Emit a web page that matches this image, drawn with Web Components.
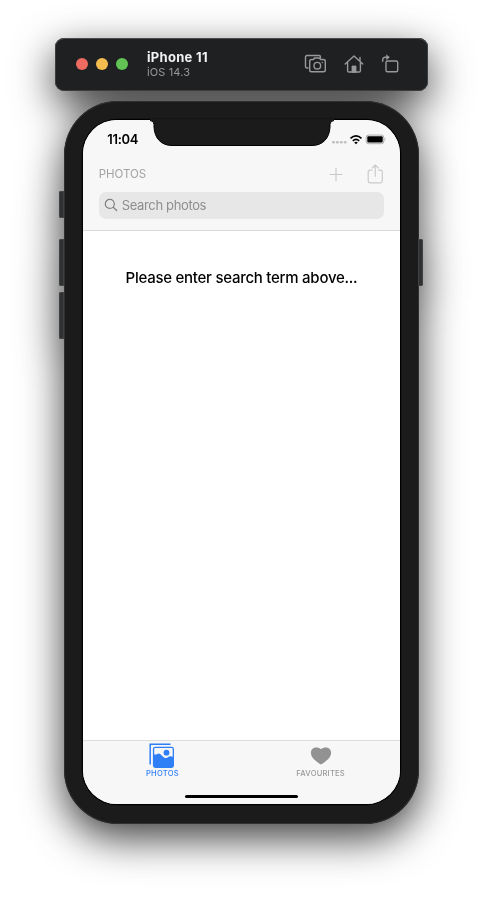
<!DOCTYPE html>
<html lang="en">
<head>
<meta charset="utf-8">
<title>Simulator</title>
<style>
html,body{margin:0;height:899px;overflow:hidden;background:#fff}
body{font-family:Inter,"Liberation Sans",sans-serif;-webkit-font-smoothing:antialiased}
</style>
</head>
<body>
<sim-stage>
  <sim-titlebar device="iPhone 11" os="iOS 14.3"></sim-titlebar>
  <sim-phone>
    <status-bar time="11:04"></status-bar>
    <nav-header heading="PHOTOS" placeholder="Search photos"></nav-header>
    <photo-content>Please enter search term above...</photo-content>
    <tab-bar>
      <tab-item icon="photos" active>PHOTOS</tab-item>
      <tab-item icon="heart">FAVOURITES</tab-item>
    </tab-bar>
  </sim-phone>
</sim-stage>
<script>
const define = (name, render) => customElements.define(name, class extends HTMLElement {
  constructor() { super(); this.attachShadow({ mode: "open" }); }
  connectedCallback() { this.shadowRoot.innerHTML = render(this); }
});

define("sim-stage", () => `<style>
:host{display:flex;flex-direction:column;align-items:center;box-sizing:border-box;width:483px;height:899px;padding-top:38px;gap:11px;filter:drop-shadow(0 14px 21px rgba(0,0,0,.76))}
</style><slot></slot>`);

define("sim-titlebar", el => `<style>
:host{display:flex;align-items:center;box-sizing:border-box;width:373px;height:52.5px;margin-bottom:-.5px;padding:0 29px 0 21px;border-radius:9px;background:#1e2022;box-shadow:inset 0 0 0 .8px #444648,inset 0 1px 0 #5c5e60}
.lights{display:flex;gap:8px}
i{width:12px;height:12px;border-radius:50%;background:#ed6b60}
i:nth-child(2){background:#f5bd4f}i:nth-child(3){background:#61c454}
.name{flex:1;display:flex;flex-direction:column;margin-left:19px;gap:0}
b{font-size:13px;line-height:15px;font-weight:700;color:#f2f2f2;letter-spacing:.3px}
span{font-size:11px;line-height:14px;color:#98999a;letter-spacing:.12px}
svg{display:block;fill:none;stroke:#98999a;stroke-width:1.4;stroke-linecap:round;stroke-linejoin:round}
.tools{display:flex;gap:17px;align-items:center}
</style>
<div class="lights"><i></i><i></i><i></i></div>
<div class="name"><b>${el.getAttribute("device")}</b><span>${el.getAttribute("os")}</span></div>
<div class="tools">
<svg width="23" height="20" viewBox="0 0 23 20"><path d="M4 14H3Q1.500 14 1.500 12.500V3Q1.500 1.500 3 1.500H15Q16.500 1.500 16.500 3V3.500"/><path d="M7.500 5.500H9.500L10.500 4H15.500L16.500 5.500H19.500Q21.300 5.500 21.300 7.300V16Q21.300 17.800 19.500 17.800H7.500Q5.700 17.800 5.700 16V7.300Q5.700 5.500 7.500 5.500Z"/><circle cx="13.300" cy="11.700" r="3.300"/><path d="M18.300 8.400v.1"/></svg>
<svg width="20" height="20" viewBox="0 0 20 20"><path d="M1.200 10L10 2L18.800 10M16 7V3.400M3.600 8.500V16.700Q3.600 18 4.900 18H15.100Q16.400 18 16.400 16.700V8.500"/><path d="M8 18V12H12V18Z" fill="#98999a" stroke-width=".8"/></svg>
<svg width="18" height="20" viewBox="0 0 18 20"><rect x="5" y="7" width="11.700" height="10.800" rx="1.500"/><path d="M1.700 7.200V5.800Q1.700 3.300 4.200 3.300H7.500"/><path d="M5.800 1.200L8.300 3.300L5.800 5.400Z" fill="#98999a" stroke-width=".7"/></svg>
</div>`);

define("sim-phone", () => `<style>
:host{display:block;position:relative;box-sizing:border-box;width:355.500px;height:722.5px;padding:19px 19.500px 19px;border-radius:54px;background:#1b1b1b;box-shadow:inset 0 0 0 1px #303031}
.screen{display:flex;flex-direction:column;height:684px;border-radius:34px;background:#fff;box-shadow:0 0 0 1.2px #000;overflow:hidden}
.notch{position:absolute;left:86px;top:18px;display:block}
.key{position:absolute;left:-5px;width:5px;border-radius:2px 0 0 2px;background:#303132;box-shadow:inset 0 0 0 .7px #484949}
.home{position:absolute;left:121px;top:693.5px;width:113px;height:3.500px;border-radius:2px;background:#000}
</style>
<div class="key" style="top:90px;height:27px"></div>
<div class="key" style="top:138px;height:47px"></div>
<div class="key" style="top:191px;height:47px"></div>
<div class="key" style="left:auto;right:-4px;top:138px;height:47px;transform:scaleX(-1)"></div>
<div class="screen"><slot></slot></div>
<svg class="notch" width="184" height="28" viewBox="0 0 184 28"><path d="M0 0V1.500H0Q4 1.500 4 5.500V8C4.500 19.500 11.500 26.500 22 26.500H162C172.500 26.500 179.500 19.500 180 8V5.500Q180 1.500 184 1.500V0Z" fill="#1b1b1b"/><path d="M0 1.500Q4 1.500 4 5.500V8C4.500 19.500 11.500 26.500 22 26.500H162C172.500 26.500 179.500 19.500 180 8V5.500Q180 1.500 184 1.500" fill="none" stroke="#000"/></svg>
<div class="home"></div>`);

define("status-bar", el => `<style>
:host{display:flex;align-items:center;justify-content:space-between;box-sizing:border-box;height:38px;padding:0 13.500px 0 24px;background:#f7f7f7;flex:none}
b{font-size:13px;font-weight:600;line-height:16px;letter-spacing:-.3px;color:#000}
svg{display:block}
</style><b>${el.getAttribute("time")}</b>
<svg width="55" height="14" viewBox="0 0 55 14">
<g fill="#c2c2c2"><rect x="1" y="9" width="3" height="2.500" rx="1"/><rect x="4.900" y="9" width="3" height="2.500" rx="1"/><rect x="8.800" y="9" width="3" height="2.500" rx="1"/><rect x="12.700" y="9" width="3" height="2.500" rx="1"/></g>
<g fill="none" stroke="#000" stroke-width="1.700"><path d="M19.500 6.400Q25 1.300 30.500 6.400"/><path d="M21.800 8.800Q25 6 28.200 8.800"/></g><path d="M23.200 10.500Q25 9.200 26.800 10.500L25 12.300Z"/>
<rect x="35.200" y="3.100" width="17.600" height="8.600" rx="2.300" fill="#f7f7f7" stroke="#aaa" stroke-width="1"/><rect x="36.300" y="4.200" width="15.400" height="6.400" rx="1" fill="#000"/><path d="M53.600 5.800Q55.300 7.400 53.600 9Z" fill="#aaa"/></svg>`);

define("nav-header", el => `<style>
:host{display:flex;flex-direction:column;box-sizing:border-box;height:73px;padding:5px 15.500px 0;background:#f7f7f7;border-bottom:1px solid #dadada;flex:none}
.row{display:flex;align-items:center;height:22px}
.heading{flex:1;font-size:11.500px;color:#a3a3a3;letter-spacing:-.05px}
svg{display:block;fill:none}
.actions{display:flex;gap:23px;stroke:#cacaca;padding-right:.5px;margin-top:-1px}
.search{display:flex;align-items:center;gap:4px;margin-top:6.500px;height:27.500px;box-sizing:border-box;padding-left:5px;border-radius:7px;background:#e7e7e7;font-size:13px;color:#8e8e8e;letter-spacing:-.36px}
</style>
<div class="row"><span class="heading">${el.getAttribute("heading")}</span><div class="actions">
<svg width="16" height="20" viewBox="0 0 16 20"><path d="M1.500 10.500H14.500M8 4V17" stroke-width="1.200"/></svg>
<svg width="17" height="20" viewBox="0 0 17 20"><path d="M5.300 6.200H3Q1.200 6.200 1.200 8V17Q1.200 18.800 3 18.800H13.500Q15.300 18.800 15.300 17V8Q15.300 6.200 13.500 6.200H11.200M8.250 12.800V1.300M5 4.300L8.250 1.100L11.500 4.300" stroke-width="1.200"/></svg></div></div>
<div class="search"><svg width="14" height="14" viewBox="0 0 14 14" stroke="#7e7e7e" stroke-width="1.200" stroke-linecap="round"><circle cx="5.800" cy="5.900" r="4.500"/><path d="M9.200 9.300L12.700 12.500"/></svg><span>${el.getAttribute("placeholder")}</span></div>`);

define("photo-content", () => `<style>
:host{display:block;flex:1;box-sizing:border-box;padding-top:37px;text-align:center;font-size:15px;line-height:20px;font-weight:500;color:#000;letter-spacing:-.26px}
</style><slot></slot>`);

define("tab-bar", () => `<style>
:host{display:grid;grid-template-columns:1fr 1fr;box-sizing:border-box;height:64px;background:#f7f7f7;border-top:1px solid #dcdcdc;flex:none}
</style><slot></slot>`);

const glyphs = {
  photos: `<svg width="26" height="26" viewBox="0 0 26 26"><path d="M1.200 21.500V1.200H21.500" fill="none" stroke="currentColor" stroke-width="1.500"/><rect x="3.900" y="3.800" width="21.100" height="21.200" rx="2.400" fill="currentColor"/><path d="M5.200 11.600V6.200Q5.200 5.100 6.300 5.100H22.600Q23.700 5.100 23.700 6.200V13.800Q21 12.200 18.500 14.400Q17 15.600 15.500 14.800Q14 14 12.800 12.500Q10.600 9.800 8.800 10.700Q7.500 11.500 5.200 11.600Z" fill="#f7f7f7"/><circle cx="17.500" cy="9.700" r="2.900" fill="currentColor"/></svg>`,
  heart: `<svg width="22" height="26" viewBox="0 0 22 26"><path d="M11 21.500C5 17.700 .9 14.200 .9 9.700C.9 6.500 3.200 4.400 6 4.400C8.200 4.400 10 5 11 6.300C12 5 13.800 4.400 16 4.400C18.800 4.400 21.100 6.500 21.100 9.700C21.100 14.200 17 17.700 11 21.500Z" fill="#929292"/></svg>`
};
define("tab-item", el => `<style>
:host{display:flex;flex-direction:column;align-items:center;padding-top:1.500px;color:#999;font-size:7.600px;line-height:9px;letter-spacing:.2px;font-weight:500}
:host([active]){color:#2f7ff7}
svg{display:block}
</style>${glyphs[el.getAttribute("icon")]}<span><slot></slot></span>`);
</script>
</body>
</html>
